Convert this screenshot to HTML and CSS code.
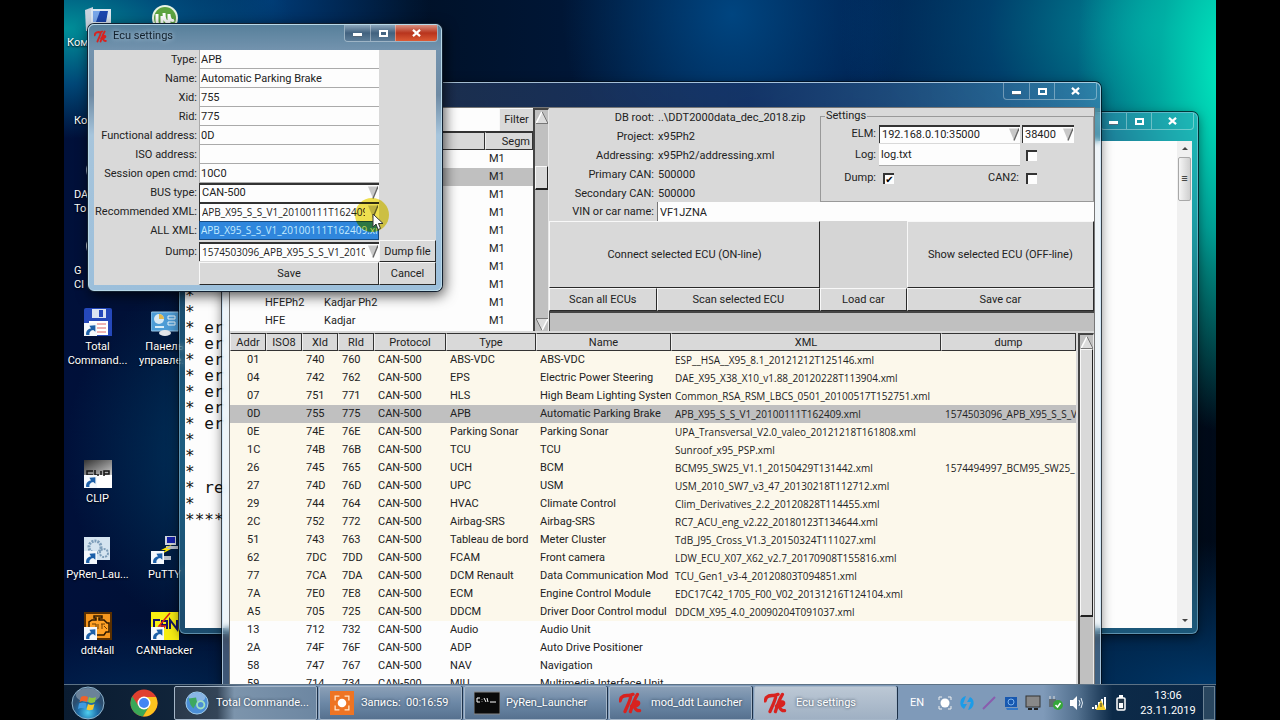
FILE: index.html
```html
<!DOCTYPE html>
<html lang="en">
<head>
<meta charset="utf-8">
<title>Ecu settings</title>
<link rel="stylesheet" href="styles.css">
</head>
<body>
<svg class="defs" aria-hidden="true">
  <symbol id="shortcut" viewBox="0 0 12 12"><rect width="12" height="12" fill="#f4f8fc"/><path d="M2 11C1.500 7 4 5 6.500 5L5 2.500 10.500 2 10.500 8 8.500 6.500C6 7 4.500 8.500 5 11Z" fill="#1c5fa8"/></symbol>
  <symbol id="tk" viewBox="0 0 24 20"><path d="M1 8C2 3 6 2 11 3.500 10 9 7 14 5.500 18M2 5C5 2 8 4 13 2M17 2C14 7 12 13 10.500 18M11.500 13C15 8 19 8 18 11 17 13 14 13 13 13 15 13 15 18 19 17" fill="none" stroke="#d8221f" stroke-width="3" stroke-linecap="round" stroke-linejoin="round"/></symbol>
  <symbol id="down" viewBox="0 0 11 13"><path d="M0 0H11L5.500 13Z" fill="#c8c8c8"/><path d="M11 0L5.500 13" stroke="#666" stroke-width="1.500"/></symbol>
  <symbol id="up" viewBox="0 0 12 12"><path d="M6 0L12 12H0Z" fill="#dcdcdc"/><path d="M6 0L0 12" stroke="#fff" stroke-width="1.500"/><path d="M6 0L12 12H0" fill="none" stroke="#777"/></symbol>
</svg>
<main class="desktop">
  <div class="icons">
    <div class="icon i1"><svg viewBox="0 0 28 28"><path d="M1 6L9 3 9 27 2 27Z" fill="#c9d3de"/><rect x="7" y="5" width="20" height="15" fill="#dbe6f0"/><path d="M9 7H24L22 18H9Z" fill="#1b46ad"/><path d="M9 7H16L12 18H9Z" fill="#78a6e8"/><path d="M11 20H23V24H11Z" fill="#9eabb8"/></svg><span class="near">Ком</span></div>
    <div class="icon i2"><svg viewBox="0 0 28 28"><circle cx="14" cy="14" r="13" fill="#e9f4e5"/><circle cx="14" cy="14" r="11" fill="#5da340"/><path d="M6 10V17Q6 22 11 21V12M13 9Q13 19 18 18V10M18 11Q19 18 23 16" stroke="#fff" stroke-width="3" fill="none"/></svg></div>
    <div class="icon i3"><span class="short">Ко</span></div>
    <div class="icon i5"><svg viewBox="0 0 28 28"><circle cx="14" cy="14" r="12" fill="#9aa9b8"/></svg><span class="short">DA<br>To</span></div>
    <div class="icon i7"><svg viewBox="0 0 28 28"><circle cx="14" cy="14" r="12" fill="#c4cbd0"/></svg><span class="short">G<br>Cl</span></div>
    <div class="icon i9"><svg viewBox="0 0 28 28"><path d="M0 2Q0 0 2 0H26Q28 0 28 2V28H3L0 25Z" fill="#2548ba"/><rect x="8" y="1" width="14" height="9" fill="#dce4f2"/><rect x="15" y="2" width="4" height="7" fill="#2548ba"/><rect x="5" y="13" width="19" height="14" fill="#fff"/><path d="M13 16H22M13 20H22M13 24H22" stroke="#d66" /><use href="#shortcut" y="15" width="13" height="13"/></svg><span>Total<br>Command...</span></div>
    <div class="icon i10"><svg viewBox="0 0 28 28"><rect x="0" y="4" width="28" height="19" rx="1" fill="#4d9cd6" stroke="#9cc8e6"/><circle cx="8" cy="11" r="5" fill="#d8e9f4"/><path d="M8 11V6A5 5 0 0 1 13 11Z" fill="#e4b94c"/><path d="M17 8H24V11H17ZM17 14H24V17H17Z" fill="none" stroke="#e8f4fb"/><path d="M4 19H13" stroke="#d9edf8" stroke-width="2"/><ellipse cx="14" cy="25" rx="6" ry="3" fill="#e3e7ea"/></svg><span>Панель<br>управле...</span></div>
    <div class="icon i13"><svg viewBox="0 0 28 28"><defs><linearGradient id="cg" x2="1" y2="1"><stop stop-color="#333"/><stop offset="1" stop-color="#ccc"/></linearGradient></defs><rect width="28" height="28" fill="#fff"/><rect width="28" height="15" fill="url(#cg)"/><path d="M9 11H3V15H9M11 10V15H15M17 11V15M20 16V11H25V14H20" fill="none" stroke="#151515" stroke-width="1.500"/><use href="#shortcut" y="15" width="13" height="13"/></svg><span>CLIP</span></div>
    <div class="icon i15"><svg viewBox="0 0 28 28"><rect x="0" y="1" width="26" height="23" fill="#d5e4f0"/><circle cx="11" cy="11" r="6" fill="none" stroke="#7d9db9" stroke-width="3" stroke-dasharray="2 1"/><circle cx="20" cy="17" r="4" fill="none" stroke="#7d9db9" stroke-width="2" stroke-dasharray="2 1"/><use href="#shortcut" y="15" width="13" height="13"/></svg><span>PyRen_Lau...</span></div>
    <div class="icon i16"><svg viewBox="0 0 28 28"><rect x="14" y="0" width="11" height="9" fill="#cfd4dc"/><rect x="16" y="1" width="8" height="6" fill="#1620a8"/><path d="M15 10H27V13H15ZM13 20H20V24H13Z" fill="#b9c0cb"/><path d="M22 8L10 14H15L7 20 20 13H15Z" fill="#ffe600"/><use href="#shortcut" y="15" width="13" height="13"/></svg><span>PuTTY</span></div>
    <div class="icon i17"><svg viewBox="0 0 28 28"><rect width="28" height="28" fill="#f5961e"/><rect x="1" y="1" width="26" height="26" fill="none" stroke="#5b3000" stroke-width="2"/><path d="M10 4H18V6H15V8H20L23 11H25V20H22L20 23H9L5 19V10L8 8H12V6H10Z" fill="#ffa126" stroke="#2e1800" stroke-width="1.500"/><path d="M8 12H12V16M14 12V17M17 12H21M18 12V17M20 14L23 17" stroke="#6d3c00" fill="none"/><use href="#shortcut" y="15" width="13" height="13"/></svg><span>ddt4all</span></div>
    <div class="icon i18"><svg viewBox="0 0 28 28"><rect width="28" height="28" fill="#f7ee12"/><path d="M9 8H3V16H9M11 17V9H16V17M11 13H16M19 17V8L26 17V8" stroke="#141463" stroke-width="2" fill="none"/><path d="M19 1L8 14H14L6 25" stroke="#d92318" stroke-width="1.500" fill="none"/><use href="#shortcut" y="15" width="13" height="13"/></svg><span>CANHacker</span></div>
  </div>

  <section class="window console" aria-label="Console">
    <div class="titlebar"><div class="caption"><button aria-label="Minimize"><i class="min"></i></button><button aria-label="Maximize"><i class="max"></i></button><button class="close" aria-label="Close"><svg viewBox="0 0 10 9"><path d="M1 1L9 8M9 1L1 8" stroke="#fff" stroke-width="2.500"/></svg></button></div></div>
    <div class="console-body">
<pre>*
*
* er
* er
* er
* er
* er
* er
* er
*
*
*
* re
*
****</pre>
      <div class="winscroll"><b class="tri-up"></b><span class="grip">≡</span><b class="tri-down"></b></div>
    </div>
  </section>

  <section class="window launcher" aria-label="mod_ddt Launcher">
    <div class="titlebar"><div class="caption"><button aria-label="Minimize"><i class="min"></i></button><button aria-label="Maximize"><i class="max"></i></button><button class="close" aria-label="Close"><svg viewBox="0 0 10 9"><path d="M1 1L9 8M9 1L1 8" stroke="#fff" stroke-width="2.500"/></svg></button></div></div>
    <div class="client">
      <div class="upper">
        <div class="cars">
          <div class="cars-main">
            <div class="filter"><input aria-label="Filter text"><button class="raised">Filter</button></div>
            <table class="grid car-table">
              <colgroup><col class="c-code"><col><col class="c-seg"></colgroup>
              <thead><tr><th></th><th></th><th class="seg">Segm</th></tr></thead>
              <tbody>
                <tr><td></td><td></td><td>M1</td></tr>
                <tr class="sel"><td></td><td></td><td>M1</td></tr>
                <tr><td></td><td></td><td>M1</td></tr>
                <tr><td></td><td></td><td>M1</td></tr>
                <tr><td></td><td></td><td>M1</td></tr>
                <tr><td></td><td></td><td>M1</td></tr>
                <tr><td></td><td></td><td>M1</td></tr>
                <tr><td></td><td></td><td>M1</td></tr>
                <tr><td>HFEPh2</td><td>Kadjar Ph2</td><td>M1</td></tr>
                <tr><td>HFE</td><td>Kadjar</td><td>M1</td></tr>
              </tbody>
            </table>
          </div>
          <div class="tkscroll cars-scroll"><svg class="arr"><use href="#up"/></svg><span class="thumb"></span><svg class="arr flip"><use href="#up"/></svg></div>
        </div>
        <div class="panel">
          <div class="info-row">
            <dl class="info">
              <dt>DB root:</dt><dd>..\DDT2000data_dec_2018.zip</dd>
              <dt>Project:</dt><dd>x95Ph2</dd>
              <dt>Addressing:</dt><dd>x95Ph2/addressing.xml</dd>
              <dt>Primary CAN:</dt><dd>500000</dd>
              <dt>Secondary CAN:</dt><dd>500000</dd>
            </dl>
            <fieldset class="settings">
              <legend>Settings</legend>
              <label for="elm">ELM:</label>
              <div class="combo"><select id="elm"><option>192.168.0.10:35000</option></select><svg><use href="#down"/></svg></div>
              <div class="combo speed"><select aria-label="Speed"><option>38400</option></select><svg><use href="#down"/></svg></div>
              <label for="log">Log:</label>
              <input id="log" class="text" value="log.txt">
              <input type="checkbox" class="check" aria-label="Enable log">
              <label for="dumpcheck">Dump:</label>
              <div class="checks"><input type="checkbox" class="check" id="dumpcheck" checked><label for="can2">CAN2:</label></div>
              <input type="checkbox" class="check" id="can2">
            </fieldset>
          </div>
          <div class="vin"><label for="vin">VIN or car name:</label><input id="vin" class="text" value="VF1JZNA"></div>
          <div class="actions">
            <button class="raised wide">Connect selected ECU (ON-line)</button><span class="blank"></span><button class="raised">Show selected ECU (OFF-line)</button>
            <button class="raised">Scan all ECUs</button><button class="raised">Scan selected ECU</button><button class="raised">Load car</button><button class="raised">Save car</button>
          </div>
          <div class="trough"></div>
        </div>
      </div>
      <div class="lower">
        <div class="ecu-list">
        <table class="grid ecu-table">
          <colgroup><col class="w36"><col class="w36"><col class="w36"><col class="w36"><col class="w72"><col class="w90"><col class="w135"><col class="w270"><col></colgroup>
          <thead><tr><th>Addr</th><th>ISO8</th><th>XId</th><th>RId</th><th>Protocol</th><th>Type</th><th>Name</th><th>XML</th><th>dump</th></tr></thead>
          <tbody class="known">
            <tr><td>01</td><td></td><td>740</td><td>760</td><td>CAN-500</td><td>ABS-VDC</td><td>ABS-VDC</td><td>ESP__HSA__X95_8.1_20121212T125146.xml</td><td></td></tr>
            <tr><td>04</td><td></td><td>742</td><td>762</td><td>CAN-500</td><td>EPS</td><td>Electric Power Steering</td><td>DAE_X95_X38_X10_v1.88_20120228T113904.xml</td><td></td></tr>
            <tr><td>07</td><td></td><td>751</td><td>771</td><td>CAN-500</td><td>HLS</td><td>High Beam Lighting System</td><td>Common_RSA_RSM_LBCS_0501_20100517T152751.xml</td><td></td></tr>
            <tr class="sel"><td>0D</td><td></td><td>755</td><td>775</td><td>CAN-500</td><td>APB</td><td>Automatic Parking Brake</td><td>APB_X95_S_S_V1_20100111T162409.xml</td><td>1574503096_APB_X95_S_S_V</td></tr>
            <tr><td>0E</td><td></td><td>74E</td><td>76E</td><td>CAN-500</td><td>Parking Sonar</td><td>Parking Sonar</td><td>UPA_Transversal_V2.0_valeo_20121218T161808.xml</td><td></td></tr>
            <tr><td>1C</td><td></td><td>74B</td><td>76B</td><td>CAN-500</td><td>TCU</td><td>TCU</td><td>Sunroof_x95_PSP.xml</td><td></td></tr>
            <tr><td>26</td><td></td><td>745</td><td>765</td><td>CAN-500</td><td>UCH</td><td>BCM</td><td>BCM95_SW25_V1.1_20150429T131442.xml</td><td>1574494997_BCM95_SW25_</td></tr>
            <tr><td>27</td><td></td><td>74D</td><td>76D</td><td>CAN-500</td><td>UPC</td><td>USM</td><td>USM_2010_SW7_v3_47_20130218T112712.xml</td><td></td></tr>
            <tr><td>29</td><td></td><td>744</td><td>764</td><td>CAN-500</td><td>HVAC</td><td>Climate Control</td><td>Clim_Derivatives_2.2_20120828T114455.xml</td><td></td></tr>
            <tr><td>2C</td><td></td><td>752</td><td>772</td><td>CAN-500</td><td>Airbag-SRS</td><td>Airbag-SRS</td><td>RC7_ACU_eng_v2.22_20180123T134644.xml</td><td></td></tr>
            <tr><td>51</td><td></td><td>743</td><td>763</td><td>CAN-500</td><td>Tableau de bord</td><td>Meter Cluster</td><td>TdB_J95_Cross_V1.3_20150324T111027.xml</td><td></td></tr>
            <tr><td>62</td><td></td><td>7DC</td><td>7DD</td><td>CAN-500</td><td>FCAM</td><td>Front camera</td><td>LDW_ECU_X07_X62_v2.7_20170908T155816.xml</td><td></td></tr>
            <tr><td>77</td><td></td><td>7CA</td><td>7DA</td><td>CAN-500</td><td>DCM Renault</td><td>Data Communication Mod</td><td>TCU_Gen1_v3-4_20120803T094851.xml</td><td></td></tr>
            <tr><td>7A</td><td></td><td>7E0</td><td>7E8</td><td>CAN-500</td><td>ECM</td><td>Engine Control Module</td><td>EDC17C42_1705_F00_V02_20131216T124104.xml</td><td></td></tr>
            <tr><td>A5</td><td></td><td>705</td><td>725</td><td>CAN-500</td><td>DDCM</td><td>Driver Door Control modul</td><td>DDCM_X95_4.0_20090204T091037.xml</td><td></td></tr>
          </tbody>
          <tbody>
            <tr><td>13</td><td></td><td>712</td><td>732</td><td>CAN-500</td><td>Audio</td><td>Audio Unit</td><td></td><td></td></tr>
            <tr><td>2A</td><td></td><td>74F</td><td>76F</td><td>CAN-500</td><td>ADP</td><td>Auto Drive Positioner</td><td></td><td></td></tr>
            <tr><td>58</td><td></td><td>747</td><td>767</td><td>CAN-500</td><td>NAV</td><td>Navigation</td><td></td><td></td></tr>
            <tr><td>59</td><td></td><td>714</td><td>734</td><td>CAN-500</td><td>MIU</td><td>Multimedia Interface Unit</td><td></td><td></td></tr>
          </tbody>
        </table>
        </div>
        <div class="tkscroll ecu-scroll"><svg class="arr"><use href="#up"/></svg><span class="thumb"></span></div>
      </div>
    </div>
  </section>

  <section class="window dialog" aria-label="Ecu settings">
    <div class="titlebar"><svg class="tk"><use href="#tk"/></svg><span class="title">Ecu settings</span><div class="caption"><button aria-label="Minimize"><i class="min"></i></button><button aria-label="Maximize"><i class="max"></i></button><button class="close" aria-label="Close"><svg viewBox="0 0 10 9"><path d="M1 1L9 8M9 1L1 8" stroke="#fff" stroke-width="2.500"/></svg></button></div></div>
    <form class="form">
      <label for="f1">Type:</label><input id="f1" class="text" value="APB">
      <label for="f2">Name:</label><input id="f2" class="text" value="Automatic Parking Brake">
      <label for="f3">Xid:</label><input id="f3" class="text" value="755">
      <label for="f4">Rid:</label><input id="f4" class="text" value="775">
      <label for="f5">Functional address:</label><input id="f5" class="text" value="0D">
      <label for="f6">ISO address:</label><input id="f6" class="text" value="">
      <label for="f7">Session open cmd:</label><input id="f7" class="text" value="10C0">
      <label for="f8">BUS type:</label><div class="combo"><select id="f8"><option>CAN-500</option></select><svg><use href="#down"/></svg></div>
      <label for="f9">Recommended XML:</label><div class="combo file"><select id="f9"><option>APB_X95_S_S_V1_20100111T162409</option></select><svg><use href="#down"/></svg></div>
      <label for="f10">ALL XML:</label><div class="combo file picked"><select id="f10"><option>APB_X95_S_S_V1_20100111T162409.xml</option></select></div>
      <label for="f11">Dump:</label><div class="combo file"><select id="f11"><option>1574503096_APB_X95_S_S_V1_2010</option></select><svg><use href="#down"/></svg></div><button type="button" class="raised">Dump file</button>
      <button type="button" class="raised save">Save</button><button type="button" class="raised">Cancel</button>
    </form>
  </section>

  <span class="halo"></span>
  <svg class="cursor" viewBox="0 0 12 18"><path d="M1 1V14L4 11 6 16.500 8.500 15.500 6.500 10.500H11Z" fill="#fff" stroke="#333"/></svg>

  <nav class="taskbar">
    <button class="start" aria-label="Start"><svg viewBox="0 0 34 34"><defs><radialGradient id="orb" cy=".8"><stop stop-color="#4fd0f0"/><stop offset=".6" stop-color="#1e6ea8"/><stop offset="1" stop-color="#2c4d6e"/></radialGradient></defs><circle cx="17" cy="17" r="16" fill="url(#orb)" stroke="#8db2cb"/><ellipse cx="17" cy="9" rx="12" ry="7" fill="#fff" opacity=".3"/><path d="M10 11Q13 9 17 11L16 16Q12 14 8.500 16Z" fill="#f0622a"/><path d="M18 11Q21 13 25 11L24 16Q20 18 17 16Z" fill="#8cc63f"/><path d="M8 17.500Q12 15.500 15.500 17.500L14.500 23Q11 21 7 23Z" fill="#3f9ae0"/><path d="M17 18Q20 20 23.500 18L22 23.500Q18 25 15.500 23.500Z" fill="#fbc92b"/></svg></button>
    <button class="chrome" aria-label="Google Chrome"><svg viewBox="0 0 28 28"><circle cx="14" cy="14" r="13.500" fill="#e0402f"/><path d="M2.300 7.200A13.500 13.500 0 0 0 13 27.500L19.500 17 8.500 17Z" fill="#3aa757"/><path d="M14 8H26A13.500 13.500 0 0 1 13 27.500L19.500 17Z" fill="#fcc31e"/><circle cx="14" cy="14" r="6.500" fill="#fff"/><circle cx="14" cy="14" r="5" fill="#4285f4"/></svg></button>
    <div class="tasks">
      <button class="task"><svg class="ti" viewBox="0 0 26 26"><circle cx="13" cy="13" r="12" fill="#4b8ed6" stroke="#a8d3ee"/><ellipse cx="13" cy="7" rx="9" ry="5" fill="#fff" opacity=".35"/><path d="M4 8L12 7 13 12 9 19 6 15Z" fill="#3da860"/><circle cx="17" cy="15" r="4" fill="none" stroke="#9fe0bd" stroke-width="2"/></svg><span>Total Commande...</span></button>
      <button class="task"><svg class="ti" viewBox="0 0 28 28"><rect width="28" height="28" fill="#ee7423"/><path d="M6 11V6H11M17 6H22V11M22 17V22H17M11 22H6V17" fill="none" stroke="#ffe6cb" stroke-width="1.500"/><circle cx="14" cy="14" r="5" fill="#fff"/></svg><span>Запись:&nbsp; 00:16:59</span></button>
      <button class="task"><svg class="ti" viewBox="0 0 26 22"><rect width="26" height="22" fill="#0a0a0a" stroke="#888"/><path d="M6 6H3V10H6M8 7V7.500M8 9V9.500M10 6L12 10M13 6L14 10M16 10H22" stroke="#fff" fill="none"/></svg><span>PyRen_Launcher</span></button>
      <button class="task"><svg class="ti"><use href="#tk"/></svg><span>mod_ddt Launcher</span></button>
      <button class="task active"><svg class="ti"><use href="#tk"/></svg><span>Ecu settings</span></button>
    </div>
    <div class="tray">
      <span class="lang">EN</span>
      <svg viewBox="0 0 16 16"><circle cx="8" cy="8" r="4.500" fill="#fff"/><path d="M2 5V2H5M11 2H14V5M14 11V14H11M5 14H2V11" fill="none" stroke="#eee"/></svg>
      <svg viewBox="0 0 16 16"><path d="M7 1A7 7 0 0 0 5 14L8 9H4Z" fill="#1c9ce8"/><path d="M9 15A7 7 0 0 0 11 2L8 7H12Z" fill="#1c9ce8"/></svg>
      <svg viewBox="0 0 16 16"><path d="M2 14L14 2" stroke="#8a5cae" stroke-width="2"/></svg>
      <svg viewBox="0 0 16 16"><rect x="2" y="2" width="12" height="10" fill="#1758b0"/><circle cx="8" cy="7" r="3" fill="none" stroke="#7db5ee"/><path d="M3 13H15V15H4Z" fill="#3277c8"/></svg>
      <svg viewBox="0 0 16 16"><rect x="1" y="1" width="14" height="11" fill="#888" stroke="#333"/><path d="M3 14H7M9 14H13" stroke="#222" stroke-width="2"/></svg>
      <svg viewBox="0 0 16 16"><rect x="2" y="4" width="7" height="8" fill="#606b73"/><path d="M3 1V4M7 1V4" stroke="#ddd"/><circle cx="11" cy="10" r="5" fill="#36a63b"/><path d="M8.500 10L10.500 12 13.500 8" stroke="#fff" stroke-width="1.500" fill="none"/></svg>
      <svg viewBox="0 0 16 16"><path d="M1 5H4L8 1V15L4 11H1Z" fill="#fff"/><path d="M10 5Q12 8 10 11M12 3Q15 8 12 13" stroke="#e4edf5" fill="none"/></svg>
      <svg viewBox="0 0 16 16"><path d="M2 12V14M5 10V14M8 7V14M11 4V14M14 2V14" stroke="#fff" stroke-width="2"/><path d="M10 5L15 15H5Z" fill="#f5cf2b"/><path d="M10 8V12" stroke="#333"/></svg>
      <svg viewBox="0 0 16 16"><rect x="4" y="3" width="8" height="12" rx="1" fill="#24384a" stroke="#fff" stroke-width="1.500"/><rect x="6" y="0" width="4" height="3" fill="#fff"/><rect x="6" y="8" width="4" height="5" fill="#fff"/></svg>
      <div class="clock"><time>13:06</time><time>23.11.2019</time></div>
      <button class="show" aria-label="Show desktop"></button>
    </div>
  </nav>
</main>
</body>
</html>
```
FILE: styles.css
```css
* { box-sizing: border-box; }
body { margin: 0; background: #000; font: 11px/18px Roboto, "Open Sans", sans-serif; color: #222; }
button, input, select { font: inherit; color: inherit; margin: 0; padding: 0; border: 0; border-radius: 0; min-width: 0; }
.defs { position: absolute; width: 0; height: 0; }
svg { display: block; flex: none; }

.desktop {
  position: relative; height: 100vh; margin: 0 5%; overflow: hidden;
  background:
    radial-gradient(ellipse 150px 360px at 101% 10%, #00ecc0, rgba(0, 180, 165, .85) 45%, transparent),
    radial-gradient(ellipse 330px 240px at 96% 4%, #009ba5, rgba(0, 90, 140, .6) 55%, transparent),
    radial-gradient(ellipse 230px 110px at 0 4%, #008f98, rgba(0, 90, 140, .75) 50%, transparent),
    radial-gradient(ellipse 170px 190px at 58% 2%, #004580, transparent),
    radial-gradient(ellipse 160px 130px at 18% 0, #003a74, transparent),
    radial-gradient(ellipse 160px 180px at 14% 63%, #003660, transparent),
    radial-gradient(ellipse 340px 150px at 100% 96%, #00386a, transparent),
    radial-gradient(ellipse 200px 100px at 8% 100%, #002a58, transparent),
    linear-gradient(90deg, #00103a, #001128 30%, #002050 70%, #000a18);
}

.icons { display: grid; grid-template-columns: 67px 67px; grid-auto-rows: 76px; padding-top: 4px; }
.icon { display: flex; flex-direction: column; align-items: center; justify-content: flex-start; gap: 4px; color: #fff; line-height: 14px; text-align: center; text-shadow: 0 1px 2px #000; white-space: nowrap; grid-column: 1; }
.icon svg { width: 28px; height: 28px; }
.near, .short { align-self: flex-start; text-align: left; padding-left: 3px; }
.short { padding-left: 10px; }
.i2, .i10, .i16, .i18 { grid-column: 2; }
.i1, .i2 { grid-row: 1; }
.i3 { grid-row: 2; padding-top: 34px; }
.i5 { grid-row: 3; }
.i7 { grid-row: 4; }
.i9, .i10 { grid-row: 5; }
.i13 { grid-row: 7; }
.i15, .i16 { grid-row: 8; }
.i17, .i18 { grid-row: 9; }

.window { position: absolute; display: flex; flex-direction: column; border: 1px solid rgba(200, 225, 245, .75); border-radius: 6px; padding: 0 5px 5px; box-shadow: 0 0 0 1px rgba(0, 10, 20, .7), 0 3px 12px rgba(0, 0, 0, .5); backdrop-filter: blur(3px); }
.titlebar { display: flex; align-items: flex-start; flex: none; }
.caption { display: flex; margin: 0 -2px 0 auto; border: 1px solid rgba(255, 255, 255, .35); border-top: 0; border-radius: 0 0 4px 4px; overflow: hidden; }
.caption button { display: grid; place-items: center; width: 25px; height: 16px; background: none; }
.caption button + button { border-left: 1px solid rgba(255, 255, 255, .35); }
.caption .close { width: 42px; }
.caption svg { width: 9px; height: 8px; }
.min { width: 9px; height: 4px; background: #fff; border: 1px solid #567; border-width: 0 0 1px; margin-top: 4px; }
.max { width: 9px; height: 7px; border: 2px solid #fff; }

.console { left: 115px; right: 18px; top: 112px; height: 522px; background: rgba(70, 165, 195, .4); border-color: rgba(160, 205, 230, .5); }
.console .titlebar { height: 28px; }
.console-body { flex: 1; display: flex; align-items: stretch; background: #fdfdfd; min-height: 0; }
.console pre { flex: 1; align-self: flex-end; margin: 0 0 100px; font: 16px/16px "DejaVu Sans Mono", monospace; color: #111; }
.winscroll { width: 15px; display: flex; flex-direction: column; align-items: center; background: #f0f0f0; padding: 6px 0; }
.tri-up, .tri-down { border: 3px solid transparent; width: 0; height: 0; }
.tri-up { border-bottom-color: #444; border-top: 0; }
.tri-down { border-top-color: #444; border-bottom: 0; margin-top: auto; }
.grip { width: 13px; height: 44px; margin-top: 7px; border: 1px solid #a8a8a8; border-radius: 2px; background: linear-gradient(90deg, #f5f5f5, #cfcfcf); line-height: 42px; text-align: center; }

.launcher { left: 158px; right: 115px; top: 82px; bottom: 0; border-radius: 6px 6px 0 0; padding: 0 5px 0 6px; background: linear-gradient(90deg, rgba(2, 12, 32, .5), rgba(5, 35, 90, .75) 60%, rgba(30, 120, 170, .6)) top/100% 25px no-repeat, rgba(205, 225, 240, .3); }
.launcher .titlebar { height: 24px; }
.client { flex: 1; min-height: 0; border: 1px solid #777; border-bottom: 0; background: #d9d9d9; display: flex; flex-direction: column; }
.upper { display: flex; flex: none; height: 223px; }
.cars { display: flex; width: 319px; flex: none; }
.cars-main { flex: 1; min-width: 0; background: #fdfdfd; }
.filter { display: flex; height: 24px; border-bottom: 1px solid #333; }
.filter input { flex: 1; background: #fdfdfd; }
.filter .raised { width: 34px; border-right: 0; border-bottom: 0; }
.raised { background: #d9d9d9; border: 1px solid #f8f8f8; border-right-color: #2a2a2a; border-bottom-color: #2a2a2a; text-align: center; white-space: nowrap; }

.grid { width: 100%; table-layout: fixed; border-collapse: separate; border-spacing: 0; }
.grid th { height: 18px; padding: 0; font-weight: 400; line-height: 15px; background: #d9d9d9; border: 1px solid #333; border-left-color: #f0f0f0; white-space: nowrap; overflow: hidden; }
.grid td { height: 18px; padding: 0 4px; line-height: 18px; white-space: nowrap; overflow: hidden; }
.sel td { background: #c0c0c0; }
.c-code { width: 90px; }
.c-seg { width: 48px; }
.car-table td:first-child { padding-left: 35px; }
.grid .seg { text-align: right; padding-right: 2px; }

.tkscroll { width: 16px; flex: none; background: #c0c0c0; border: 2px solid #444; border-right: 1px solid #e8e8e8; border-bottom: 0; display: flex; flex-direction: column; align-items: center; }
.arr { width: 12px; height: 13px; margin-top: 1px; }
.flip { transform: rotate(180deg); margin-top: auto; }
.thumb { width: 13px; background: #d9d9d9; border: 1px solid #f8f8f8; border-right-color: #222; border-bottom: 2px solid #222; }
.cars-scroll .thumb { height: 24px; margin-top: 42px; }
.ecu-scroll .thumb { height: 268px; }

.panel { flex: 1; min-width: 0; display: flex; flex-direction: column; }
.info-row { display: flex; height: 94px; }
.info { flex: 1; margin: 0; display: grid; grid-template-columns: 105px 1fr; grid-auto-rows: 19px; line-height: 20px; gap: 0 4px; }
.info dt { text-align: right; }
.info dd { margin: 0; white-space: nowrap; }
.settings { flex: none; width: 274px; margin: 0; padding: 1px 0 0; border: 1px solid #999; display: grid; grid-template-columns: 56px 141px 52px; grid-template-rows: 18px 22px 22px; gap: 1px 2px; align-content: start; align-items: center; }
.settings legend { padding: 0 1px; margin-left: 4px; line-height: 16px; }
.settings label { text-align: right; padding-right: 1px; }
.text { width: 100%; height: 100%; background: #fdfdfd; padding-left: 2px; border-bottom: 1px solid #aaa; }
.combo { position: relative; display: flex; height: 18px; background: #fdfdfd; border-top: 2px solid #333; border-left: 1px solid #333; min-width: 0; }
.combo select { appearance: none; width: 100%; background: none; padding: 0 14px 0 2px; line-height: 16px; height: 16px; overflow: hidden; text-overflow: clip; }
.combo svg { position: absolute; right: 1px; top: 1px; width: 10px; height: 13px; }
.check { appearance: none; width: 11px; height: 11px; background: #fdfdfd; border: 1px solid #333; border-width: 2px 0 0 2px; margin-left: 4px; display: grid; place-items: center; }
.check:checked::before { content: "✔"; font: 10px/9px "DejaVu Sans", sans-serif; color: #000; }
.checks { display: flex; justify-content: space-between; align-items: center; }
.vin { display: grid; grid-template-columns: 105px 1fr; gap: 3px; height: 19px; line-height: 20px; }
.vin label { text-align: right; }
.vin .text { border-bottom: 0; border-left: 1px solid #777; }
.actions { display: grid; grid-template-columns: 108fr 164fr 87fr 188fr; grid-template-rows: 67px 23px; }
.wide { grid-column: span 2; }
.blank { background: #d5d5d5; }
.trough { flex: 1; border: 2px solid #444; border-width: 2px 0 0 1px; background: #c0c0c0; }

.lower { flex: 1; min-height: 0; display: flex; align-items: stretch; gap: 2px; padding-top: 2px; background: #d9d9d9; overflow: hidden; }
.ecu-list { flex: 1; min-width: 0; background: #fdfdfd; }
.known td { background: #fcf8eb; }
.known .sel td { background: #c0c0c0; }
.ecu-table td:first-child { padding: 0 0 0 17px; }
.ecu-table td:nth-child(7) { padding-right: 0; }
.ecu-table td:nth-child(n+8), .file { font-family: "Open Sans", "Noto Sans", sans-serif; font-size: 10px; }
.w36 { width: 36px; }
.w72 { width: 72px; }
.w90 { width: 90px; }
.w135 { width: 135px; }
.w270 { width: 270px; }

.dialog { left: 24px; top: 24px; width: 354px; background: linear-gradient(#57809b, #7393ae 25px, #6e8aa3 70px, #a7c5dc 110px, #9cbfdb); border-color: #b8d8e8; box-shadow: 0 0 0 1px #122030, 2px 4px 14px rgba(0, 0, 0, .75); }
.dialog .titlebar { height: 25px; gap: 4px; color: #12202c; }
.tk { width: 15px; height: 13px; margin-top: 5px; }
.dialog .title { line-height: 22px; text-shadow: 0 0 5px #cde; }
.dialog .caption button { background: linear-gradient(#8ba6bb, #42627f 50%, #5d7d98); }
.dialog .caption .close { background: linear-gradient(#d99081, #b8341d 50%, #db5a34); }
.form { display: grid; grid-template-columns: 105px 180px 1fr; grid-template-rows: repeat(10, 19px) 22px 23px; background: #d9d9d9; line-height: 19px; }
.form label { grid-column: 1; text-align: right; padding-right: 2px; white-space: nowrap; align-self: center; }
.form .text { border-left: 1px solid #aaa; padding-left: 1px; }
.form .combo { height: 19px; align-self: center; }
.form .picked { background: #2f86dc; color: #c4ecff; border: 1px solid #174a80; }
.form .picked select { padding-right: 0; padding-left: 1px; }
.form .save { grid-column: 2; }

.halo { position: absolute; left: 291px; top: 198px; width: 34px; height: 34px; border-radius: 50%; background: rgba(235, 215, 20, .75); mix-blend-mode: multiply; }
.cursor { position: absolute; left: 308px; top: 213px; width: 12px; height: 18px; }

.taskbar { position: absolute; left: 0; right: 0; bottom: 0; height: 36px; display: flex; align-items: center; color: #fff; border-top: 1px solid #5d7285; background: linear-gradient(90deg, #0a1c31 0, #12263c 12%, #7f9ab9 17%, #7f9ab9 85%, #52708e 88%, #0c2a48 91%, #0b2745); }
.start { width: 34px; height: 34px; margin-left: 7px; background: none; }
.start svg { width: 34px; height: 34px; }
.chrome { width: 28px; height: 28px; margin-left: 25px; background: none; }
.tasks { display: flex; flex: none; gap: 2px; margin-left: 16px; height: 34px; }
.task { width: 143px; display: flex; align-items: center; gap: 6px; padding-left: 9px; border: 1px solid #a5b6c8; border-radius: 2px; background: linear-gradient(#8ba0b7, #6c88a6 50%, #56718f); text-shadow: 0 0 3px #234; white-space: nowrap; box-shadow: 1px 0 0 #1c3048; }
.task:first-child { background: linear-gradient(90deg, #29384a, #344558 30%, #7c94ac 42%, #6d87a2); }
.task.active { background: linear-gradient(#bcc8d5, #9fb0c3); }
.ti { width: 26px; height: 24px; }
.tray { display: flex; align-items: center; flex: 1; justify-content: flex-end; height: 100%; }
.tray svg { width: 16px; height: 16px; margin: 0 3px; }
.lang { margin-right: 10px; }
.clock { display: flex; flex-direction: column; width: 66px; line-height: 15px; text-align: center; margin: 0 2px 0 3px; }
.show { width: 12px; height: 34px; margin-right: 1px; background: #29465f; border: 1px solid #6b8294; }
```
